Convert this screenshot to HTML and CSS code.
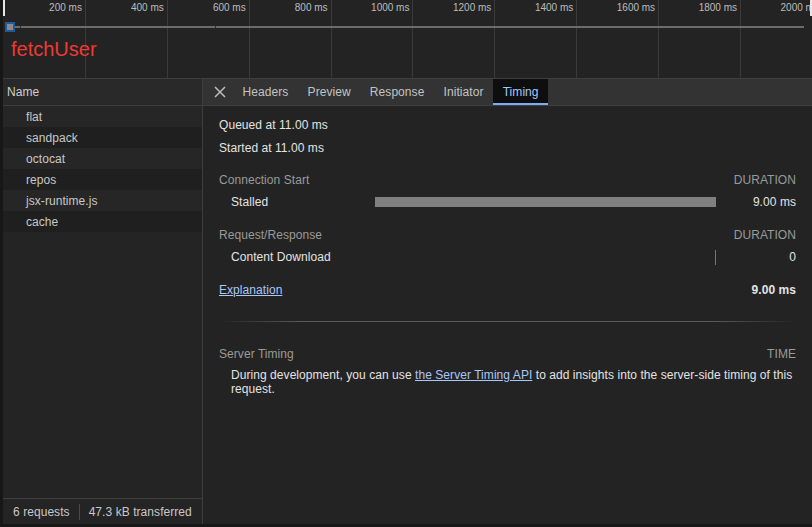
FILE: index.html
```html
<!DOCTYPE html>
<html>
<head>
<meta charset="utf-8">
<link rel="stylesheet" href="styles.css">
</head>
<body>
<div class="app">
  <div class="overview">
    <div class="ticks">
      <div class="tick"><span>200 ms</span></div>
      <div class="tick"><span>400 ms</span></div>
      <div class="tick"><span>600 ms</span></div>
      <div class="tick"><span>800 ms</span></div>
      <div class="tick"><span>1000 ms</span></div>
      <div class="tick"><span>1200 ms</span></div>
      <div class="tick"><span>1400 ms</span></div>
      <div class="tick"><span>1600 ms</span></div>
      <div class="tick"><span>1800 ms</span></div>
      <div class="tick"><span>2000 ms</span></div>
    </div>
    <div class="track"><i class="gap gap1"></i><i class="gap gap2"></i></div>
    <div class="marker"></div>
    <div class="handle handle-left"></div>
    <div class="handle handle-right"></div>
    <div class="mark-label">fetchUser</div>
  </div>
  <div class="main">
    <div class="left">
      <div class="name-head">Name</div>
      <div class="list">
        <div class="row odd">flat</div>
        <div class="row even">sandpack</div>
        <div class="row odd">octocat</div>
        <div class="row even">repos</div>
        <div class="row odd">jsx-runtime.js</div>
        <div class="row even">cache</div>
      </div>
      <div class="footer">
        <span>6 requests</span>
        <span class="sep"></span>
        <span>47.3 kB transferred</span>
      </div>
    </div>
    <div class="right">
      <div class="tabs">
        <div class="close">
          <svg width="12" height="12" viewBox="0 0 12 12"><path d="M1 1 L11 11 M11 1 L1 11" stroke="#bdbdbd" stroke-width="1.5" fill="none"/></svg>
        </div>
        <div class="tab">Headers</div>
        <div class="tab">Preview</div>
        <div class="tab">Response</div>
        <div class="tab">Initiator</div>
        <div class="tab active">Timing</div>
      </div>
      <div class="timing">
        <div class="line">Queued at 11.00 ms</div>
        <div class="line second">Started at 11.00 ms</div>
        <div class="section sec1"><span>Connection Start</span><span>DURATION</span></div>
        <div class="trow">
          <span class="label">Stalled</span>
          <span class="barcell"><span class="bar-stalled"></span></span>
          <span class="val">9.00 ms</span>
        </div>
        <div class="section sec2"><span>Request/Response</span><span>DURATION</span></div>
        <div class="trow">
          <span class="label">Content Download</span>
          <span class="barcell end"><span class="bar-download"></span></span>
          <span class="val">0</span>
        </div>
        <div class="total"><a class="link">Explanation</a><span class="val bold">9.00 ms</span></div>
        <div class="divider"></div>
        <div class="section sec3"><span>Server Timing</span><span>TIME</span></div>
        <p class="note">During development, you can use <a class="link">the Server Timing API</a> to add insights into the server-side timing of this request.</p>
      </div>
    </div>
  </div>
</div>
</body>
</html>
```
FILE: styles.css
```css
* { box-sizing: border-box; }
html, body { margin: 0; padding: 0; }
body {
  width: 812px;
  height: 527px;
  overflow: hidden;
  background: #232323;
  font-family: "Liberation Sans", Arial, sans-serif;
  font-size: 12px;
  letter-spacing: 0.06px;
  color: #e3e3e3;
}
.app {
  height: 527px;
  display: flex;
  flex-direction: column;
  border-left: 3px solid #171717;
  border-bottom: 3px solid #171717;
}
.overview {
  position: relative;
  height: 79px;
  flex: none;
  overflow: hidden;
  background: #232323;
  border-bottom: 1px solid #3e3e3e;
}
.ticks {
  display: flex;
  height: 78px;
  padding-left: 1px;
}
.tick {
  flex: none;
  width: 81.9px;
  height: 78px;
  border-right: 1px solid #3a3a3a;
  text-align: right;
  padding: 2px 3px 0 0;
  font-size: 10px;
  line-height: 12px;
  color: #bdbdbd;
  white-space: nowrap;
  letter-spacing: 0;
}
.track {
  position: absolute;
  left: 11px;
  top: 26px;
  width: 790px;
  height: 2px;
  background: #6b6b6b;
}
.gap {
  position: absolute;
  top: 0;
  width: 1px;
  height: 2px;
  background: #333;
}
.gap1 { left: 6px; }
.gap2 { left: 201px; }
.marker {
  position: absolute;
  left: 2px;
  top: 22px;
  width: 10px;
  height: 10px;
  background: #8a8a8a;
  border: 2px solid #1f5b9c;
}
.handle {
  position: absolute;
  top: 0;
  width: 2px;
  height: 16px;
  background: #e6e6e6;
}
.handle-left { left: 0; }
.handle-right { right: 0; }
.mark-label {
  position: absolute;
  left: 8px;
  top: 38px;
  font-size: 20px;
  line-height: 23px;
  letter-spacing: 0;
  color: #ee3a33;
}
.main {
  flex: 1;
  display: flex;
  min-height: 0;
}
.left {
  width: 200px;
  flex: none;
  display: flex;
  flex-direction: column;
  border-right: 1px solid #3e3e3e;
  background: #242424;
}
.name-head {
  height: 27px;
  flex: none;
  background: #292929;
  border-bottom: 1px solid #3e3e3e;
  padding-left: 4px;
  line-height: 26px;
  color: #cfcfcf;
}
.list { flex: 1; }
.row {
  height: 21px;
  line-height: 21px;
  padding-top: 1px;
  line-height: 20px;
  padding-left: 23px;
  color: #c8c8c8;
}
.row.odd { background: #262626; }
.row.even { background: #1f1f1f; }
.footer {
  height: 26px;
  flex: none;
  border-top: 1px solid #3e3e3e;
  display: flex;
  align-items: center;
  padding-left: 10px;
  color: #c8c8c8;
}
.sep {
  width: 1px;
  height: 16px;
  background: #4a4a4a;
  margin: 0 9px;
}
.right {
  flex: 1;
  display: flex;
  flex-direction: column;
  min-width: 0;
}
.tabs {
  height: 27px;
  flex: none;
  display: flex;
  background: #333333;
  border-bottom: 1px solid #3e3e3e;
}
.close {
  width: 26px;
  margin-left: 4px;
  display: flex;
  align-items: center;
  justify-content: center;
}
.tab {
  padding: 0 9.6px;
  line-height: 26px;
  color: #c3c3c3;
}
.tab.active {
  background: #0e0e0e;
  color: #a8c7fa;
  box-shadow: inset 0 -2px 0 #7cacf8;
}
.timing {
  padding: 8px 16px 0 16px;
}
.line {
  height: 22px;
  line-height: 22px;
}
.line.second { margin-top: 1px; }
.section {
  height: 22px;
  display: flex;
  justify-content: space-between;
  align-items: center;
  color: #9a9a9a;
}
.sec1 { margin-top: 10px; }
.sec2 { margin-top: 11px; }
.sec3 { margin-top: 21px; }
.trow {
  height: 22px;
  display: grid;
  grid-template-columns: 156px 1fr 80px;
  align-items: center;
}
.label { padding-left: 12px; }
.barcell {
  display: flex;
  align-items: center;
  height: 22px;
}
.barcell.end { justify-content: flex-end; }
.bar-stalled {
  width: 100%;
  height: 10px;
  background: #808080;
}
.bar-download {
  width: 1px;
  height: 15px;
  background: #1a8fe8;
  margin-top: 1px;
}
.val { text-align: right; }
.bold { font-weight: bold; }
.total {
  margin-top: 11px;
  height: 22px;
  display: flex;
  justify-content: space-between;
  align-items: center;
}
.link {
  color: #a8c7fa;
  text-decoration: underline;
}
.divider {
  margin-top: 20px;
  height: 1px;
  background: linear-gradient(to right, rgba(90,90,90,0), #5c5c5c 15%, #5c5c5c 85%, rgba(90,90,90,0));
}
.note {
  margin: 3px 0 0 0;
  padding-left: 12px;
  line-height: 14px;
}
```
